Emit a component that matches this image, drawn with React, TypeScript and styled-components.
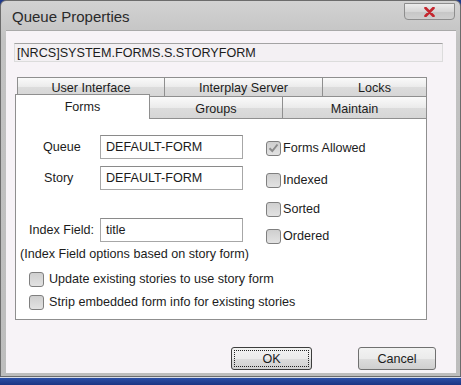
import React from "react";
import styled, { createGlobalStyle } from "styled-components";

const GlobalStyle = createGlobalStyle`
  html, body {
    margin: 0;
    padding: 0;
    background: #1f3a8c;
  }
  body {
    font-family: "Liberation Sans", Arial, sans-serif;
    font-size: 12.6px;
    color: #1c1c1c;
  }
`;

const Page = styled.div`
  width: 461px;
  height: 385px;
  display: flex;
  flex-direction: column;
  overflow: hidden;
`;

const Window = styled.div`
  height: 377px;
  box-sizing: border-box;
  display: flex;
  flex-direction: column;
  background: linear-gradient(#d2d2d2, #c2c2c2 40px, #bdbdbd);
  border: 1px solid #6c6c6c;
  border-radius: 6px 6px 0 0;
  padding: 0 4px 3px 5px;
`;

const TitleBar = styled.div`
  height: 29px;
  display: flex;
  align-items: flex-start;
  justify-content: space-between;
`;

const Title = styled.div`
  padding: 7px 0 0 6px;
  font-size: 15px;
  color: #2a2a2a;
`;

const CloseButton = styled.div`
  width: 51px;
  height: 17px;
  margin: 2px 1px 0 0;
  box-sizing: border-box;
  display: flex;
  align-items: center;
  justify-content: center;
  border: 1px solid #8d8d8d;
  border-radius: 0 0 4px 4px;
  background: linear-gradient(#ececec, #d6d6d6 50%, #c6c6c6 51%, #cfcfcf);
`;

const Client = styled.div`
  flex: 1;
  display: flex;
  flex-direction: column;
  background: #f7f3f7;
  border-top: 1px solid #a9a9a9;
  padding: 12px 0 0 8px;
`;

const PathField = styled.div`
  width: 429px;
  height: 19px;
  box-sizing: border-box;
  border: 1px solid #dcdcdc;
  border-top-color: #a3a3a3;
  background: #f3f0f3;
  padding: 2px 0 0 2px;
  line-height: 15px;
  white-space: nowrap;
`;

const TabArea = styled.div`
  margin: 15px 0 0 1px;
  width: 412px;
  display: flex;
  flex-direction: column;
`;

const TabRow = styled.div<{ $back?: boolean }>`
  display: flex;
  height: ${(p) => (p.$back ? 19 : 22)}px;
  padding-left: ${(p) => (p.$back ? 2 : 0)}px;
  align-items: flex-end;
`;

const Tab = styled.div<{ $w: number; $active?: boolean }>`
  position: relative;
  width: ${(p) => p.$w}px;
  box-sizing: border-box;
  height: ${(p) => (p.$active ? 25 : 22)}px;
  margin-bottom: ${(p) => (p.$active ? -1 : 0)}px;
  z-index: ${(p) => (p.$active ? 2 : 1)};
  display: flex;
  justify-content: center;
  padding-top: 5px;
  border: 1px solid #8f8f8f;
  border-left-width: 0;
  border-bottom: none;
  &:first-child {
    border-left-width: 1px;
  }
  background: ${(p) =>
    p.$active ? "#ffffff" : "linear-gradient(#fafafa, #ebebeb 50%, #dcdcdc 51%, #d6d6d6)"};
  color: #1c1c1c;
`;

const BackTab = styled(Tab)`
  height: 19px;
  padding-top: 3px;
`;

const Panel = styled.div`
  height: 202px;
  box-sizing: border-box;
  border: 1px solid #8f8f8f;
  background: #ffffff;
  display: flex;
  flex-direction: column;
  padding-top: 16px;
`;

const TopSection = styled.div`
  display: flex;
`;

const LeftCol = styled.div`
  width: 250px;
  display: flex;
  flex-direction: column;
`;

const RightCol = styled.div`
  display: flex;
  flex-direction: column;
`;

const FieldRow = styled.div<{ $mt?: number }>`
  display: flex;
  align-items: center;
  margin-top: ${(p) => p.$mt ?? 0}px;
`;

const Label = styled.div<{ $indent: number }>`
  width: 84px;
  box-sizing: border-box;
  padding-left: ${(p) => p.$indent}px;
  white-space: nowrap;
`;

const TextBox = styled.div`
  width: 143px;
  height: 24px;
  box-sizing: border-box;
  border: 1px solid #a7a7a7;
  border-top-color: #8a8a8a;
  background: #fff;
  padding: 4px 0 0 5px;
  line-height: 15px;
`;

const Note = styled.div`
  margin: 5px 0 0 4px;
  white-space: nowrap;
`;

const CheckRow = styled.label<{ $mt?: number; $gap: number }>`
  display: flex;
  align-items: center;
  gap: ${(p) => p.$gap}px;
  height: 18px;
  margin-top: ${(p) => p.$mt ?? 0}px;
  white-space: nowrap;
`;

const Box = styled.span`
  width: 15px;
  height: 15px;
  box-sizing: border-box;
  border: 1px solid #7f7f7f;
  border-radius: 3px;
  background: linear-gradient(#cfcfcf, #e2e2e2);
  display: flex;
  align-items: center;
  justify-content: center;
`;

const BottomChecks = styled.div`
  display: flex;
  flex-direction: column;
  padding-left: 13px;
  margin-top: 9px;
  gap: 5px;
`;

const ButtonRow = styled.div`
  display: flex;
  justify-content: flex-end;
  gap: 46px;
  padding-right: 20px;
  margin-top: 27px;
`;

const Button = styled.div<{ $w: number; $default?: boolean }>`
  width: ${(p) => p.$w}px;
  height: 23px;
  box-sizing: border-box;
  border: 1px solid ${(p) => (p.$default ? "#3d3d3d" : "#707070")};
  border-radius: 3px;
  background: linear-gradient(#f2f2f2, #ebebeb 50%, #dddddd 51%, #cfcfcf);
  display: flex;
  align-items: center;
  justify-content: center;
  padding: 2px;
`;

const FocusRing = styled.div`
  flex: 1;
  align-self: stretch;
  border: 1px dotted #222;
  display: flex;
  align-items: center;
  justify-content: center;
`;

const Taskbar = styled.div`
  flex: 1;
  border-top: 1px solid #d8dce8;
  background: linear-gradient(#2b4fa6, #1b3584);
`;

const Check: React.FC<{ checked?: boolean }> = ({ checked }) => (
  <Box>
    {checked && (
      <svg width="11" height="10" viewBox="0 0 11 10">
        <path d="M1.5 5.2 L4.3 8 L9.5 1.5" fill="none" stroke="#8c8c8c" strokeWidth="2" />
      </svg>
    )}
  </Box>
);

const App: React.FC = () => {
  return (
    <Page>
      <GlobalStyle />
      <Window>
        <TitleBar>
          <Title>Queue Properties</Title>
          <CloseButton>
            <svg width="11" height="10" viewBox="0 0 11 10">
              <path d="M1.5 1 L9.5 9 M9.5 1 L1.5 9" stroke="#c4262e" strokeWidth="2.6" strokeLinecap="round" />
            </svg>
          </CloseButton>
        </TitleBar>
        <Client>
          <PathField>[NRCS]SYSTEM.FORMS.S.STORYFORM</PathField>
          <TabArea>
            <TabRow $back>
              <BackTab $w={148}>User Interface</BackTab>
              <BackTab $w={158}>Interplay Server</BackTab>
              <BackTab $w={104}>Locks</BackTab>
            </TabRow>
            <TabRow>
              <Tab $w={135} $active>Forms</Tab>
              <Tab $w={133}>Groups</Tab>
              <Tab $w={144}>Maintain</Tab>
            </TabRow>
            <Panel>
              <TopSection>
                <LeftCol>
                  <FieldRow>
                    <Label $indent={27}>Queue</Label>
                    <TextBox>DEFAULT-FORM</TextBox>
                  </FieldRow>
                  <FieldRow $mt={7}>
                    <Label $indent={28}>Story</Label>
                    <TextBox>DEFAULT-FORM</TextBox>
                  </FieldRow>
                  <FieldRow $mt={28}>
                    <Label $indent={13}>Index Field:</Label>
                    <TextBox>title</TextBox>
                  </FieldRow>
                  <Note>(Index Field options based on story form)</Note>
                </LeftCol>
                <RightCol>
                  <CheckRow $gap={2} $mt={4}>
                    <Check checked />
                    Forms Allowed
                  </CheckRow>
                  <CheckRow $gap={2} $mt={14}>
                    <Check />
                    Indexed
                  </CheckRow>
                  <CheckRow $gap={2} $mt={11}>
                    <Check />
                    Sorted
                  </CheckRow>
                  <CheckRow $gap={2} $mt={9}>
                    <Check />
                    Ordered
                  </CheckRow>
                </RightCol>
              </TopSection>
              <BottomChecks>
                <CheckRow $gap={5}>
                  <Check />
                  Update existing stories to use story form
                </CheckRow>
                <CheckRow $gap={5}>
                  <Check />
                  Strip embedded form info for existing stories
                </CheckRow>
              </BottomChecks>
            </Panel>
          </TabArea>
          <ButtonRow>
            <Button $w={81} $default>
              <FocusRing>OK</FocusRing>
            </Button>
            <Button $w={78}>Cancel</Button>
          </ButtonRow>
        </Client>
      </Window>
      <Taskbar />
    </Page>
  );
};

export default App;
